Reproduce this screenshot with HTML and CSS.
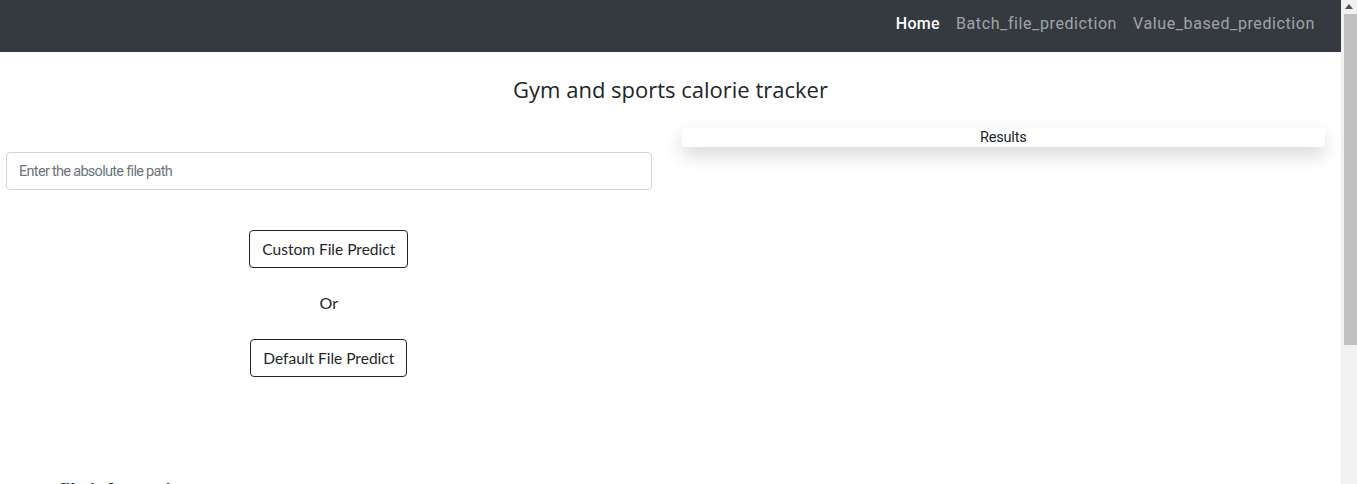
FILE: index.html
```html
<!DOCTYPE html>
<html lang="en">

<head>
    <meta charset="UTF-8">
    <meta name="viewport" content="width=device-width, initial-scale=1.0">
    <title>Gym and sports calorie tracker</title>
    <link rel="stylesheet" href="styles.css">
</head>

<body>
    <nav class="navbar">
        <a href="#" class="nav-link active">Home</a>
        <a href="#" class="nav-link">Batch_file_prediction</a>
        <a href="#" class="nav-link">Value_based_prediction</a>
    </nav>

    <h3 class="title">Gym and sports calorie tracker</h3>

    <div class="row">
        <div class="col-left">
            <input type="text" class="form-control" placeholder="Enter the absolute file path">
            <div class="actions">
                <button class="btn">Custom File Predict</button>
                <p class="or">Or</p>
                <button class="btn">Default File Predict</button>
            </div>
        </div>
        <div class="col-right">
            <div class="card">Results</div>
        </div>
    </div>

    <section class="info">
        <h5 class="info-title">Input file information</h5>
        <ul class="info-list">
            <li>The file must be a csv with the same columns as the training data.</li>
            <li>Columns: Gender, Age, Height, Weight, Duration, Heart_Rate, Body_Temp.</li>
            <li>Predictions are written to the Prediction_Output_File folder.</li>
            <li>Default File Predict uses the bundled sample batch file.</li>
        </ul>
    </section>

    <!-- window scrollbar -->
    <div class="scrollbar" aria-hidden="true">
        <span class="scroll-arrow"></span>
        <span class="scroll-thumb"></span>
    </div>
</body>

</html>
```

FILE: styles.css
```css
* {
    box-sizing: border-box;
    margin: 0;
    padding: 0;
}

body {
    font-family: "Open Sans", "Noto Sans", sans-serif;
    background-color: #fff;
    color: #212529;
    margin-right: 16px;
}

.scrollbar {
    position: fixed;
    top: 0;
    right: 0;
    width: 16px;
    height: 100%;
    background: #f1f1f1;
    display: flex;
    flex-direction: column;
    align-items: center;
}

.scroll-arrow {
    margin-top: 4px;
    width: 0;
    height: 0;
    border-left: 4px solid transparent;
    border-right: 4px solid transparent;
    border-bottom: 5px solid #505050;
}

.scroll-thumb {
    margin-top: 5px;
    width: 13px;
    height: 331px;
    margin-left: 2px;
    background: #c1c1c1;
}

.navbar {
    height: 52px;
    background-color: #343a40;
    display: flex;
    justify-content: flex-end;
    align-items: center;
    padding: 0 18px 6px 0;
}

.nav-link {
    font-family: Roboto, sans-serif;
    font-size: 16px;
    color: rgba(255, 255, 255, 0.55);
    text-decoration: none;
    padding: 0 8px;
    letter-spacing: 0.6px;
}

.nav-link.active {
    color: #fff;
    font-weight: 500;
    letter-spacing: 0.3px;
}

.title {
    font-size: 22px;
    font-weight: 400;
    text-align: center;
    margin: 22px 0 24px;
    line-height: 30px;
}

.row {
    display: grid;
    grid-template-columns: 1fr 1fr;
}

.col-left {
    padding: 24px 19px 0 6px;
}

.col-right {
    padding: 0 16px 0 11px;
}

.form-control {
    display: block;
    width: 100%;
    height: 38px;
    padding: 0 12px;
    font-family: Roboto, sans-serif;
    font-size: 14.5px;
    border: 1px solid #ced4da;
    border-radius: 4px;
    color: #495057;
}

.form-control::placeholder {
    color: #6c757d;
    letter-spacing: -0.7px;
}

.actions {
    display: flex;
    flex-direction: column;
    align-items: center;
    padding-top: 40px;
}

.btn {
    font-family: Lato, "Open Sans", sans-serif;
    font-size: 15.5px;
    color: #212529;
    background: #fff;
    border: 1px solid #212529;
    border-radius: 4px;
    height: 38px;
    padding: 0 12px;
}

.or {
    font-family: Lato, sans-serif;
    font-size: 16px;
    line-height: 24px;
    margin: 23px 0 24px;
}

.card {
    font-family: Roboto, sans-serif;
    font-size: 14.5px;
    letter-spacing: -0.2px;
    text-align: center;
    line-height: 19px;
    height: 19px;
    border-radius: 4px;
    background: #fff;
    box-shadow: 0 8px 18px rgba(0, 0, 0, 0.16);
}

.info {
    padding: 102px 8px 200px;
}

.info-title {
    font-family: "Open Sans", sans-serif;
    font-size: 17px;
    font-weight: 700;
    margin-bottom: 12px;
}

.info-list {
    padding-left: 24px;
    font-size: 15px;
    line-height: 26px;
}
```
